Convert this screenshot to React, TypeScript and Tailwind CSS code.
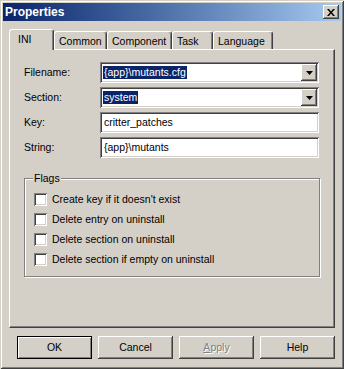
import React from "react";

const raised =
  "shadow-[inset_-1px_-1px_#404040,inset_1px_1px_#ffffff,inset_-2px_-2px_#808080,inset_2px_2px_#d4d0c8]";
const sunken =
  "shadow-[inset_1px_1px_#808080,inset_-1px_-1px_#ffffff,inset_2px_2px_#404040,inset_-2px_-2px_#d4d0c8]";

type TabProp = { label: string; width: string; active?: boolean };

const tabs: TabProp[] = [
  { label: "INI", width: "w-[45px]", active: true },
  { label: "Common", width: "w-[53px]" },
  { label: "Component", width: "w-[65px]" },
  { label: "Task", width: "w-[41px]" },
  { label: "Language", width: "w-[60px]" },
];

const flags = [
  "Create key if it doesn't exist",
  "Delete entry on uninstall",
  "Delete section on uninstall",
  "Delete section if empty on uninstall",
];

function Arrow() {
  return (
    <svg width="7" height="4" viewBox="0 0 7 4">
      <path d="M0 0h7L3.5 4z" fill="#000" />
    </svg>
  );
}

function Combo({ value }: { value: string }) {
  return (
    <div className={`w-[219px] h-[21px] bg-white flex items-center p-[2px] ${sunken}`}>
      <div className="flex-1 flex items-center pl-[1px]">
        <span className="bg-[#0a246a] text-white leading-[13px] px-[1px]">{value}</span>
      </div>
      <div className={`w-[16px] h-[17px] bg-[#d4d0c8] flex items-center justify-center ${raised}`}>
        <Arrow />
      </div>
    </div>
  );
}

function TextBox({ value }: { value: string }) {
  return (
    <div className={`w-[219px] h-[21px] bg-white flex items-center pl-[4px] ${sunken}`}>
      <span className="leading-[13px]">{value}</span>
    </div>
  );
}

function Button({ label, isDefault = false, disabled = false }: { label: React.ReactNode; isDefault?: boolean; disabled?: boolean }) {
  const frame = isDefault
    ? "border border-black shadow-[inset_1px_1px_#ffffff,inset_-1px_-1px_#808080]"
    : raised;
  return (
    <div
      className={`w-[75px] h-[23px] flex items-center justify-center bg-[#d4d0c8] ${frame} ${
        disabled ? "text-[#808080] [text-shadow:1px_1px_0_#ffffff]" : "text-black"
      }`}
    >
      {label}
    </div>
  );
}

export default function App() {
  return (
    <div
      className={`w-[344px] h-[369px] bg-[#d4d0c8] p-[3px] flex flex-col text-[10.5px] text-black font-['Liberation_Sans',Arial,sans-serif] shadow-[inset_1px_1px_#d4d0c8,inset_-1px_-1px_#404040,inset_2px_2px_#ffffff,inset_-2px_-2px_#808080]`}
    >
      {/* title bar */}
      <div className="h-[18px] flex items-center justify-between pl-[2px] pr-[2px] bg-gradient-to-r from-[#0a246a] to-[#a6caf0]">
        <span className="text-white font-bold text-[12px] leading-[14px]">Properties</span>
        <div className={`w-[16px] h-[14px] bg-[#d4d0c8] flex items-center justify-center ${raised}`}>
          <svg width="8" height="7" viewBox="0 0 8 7">
            <path d="M0 0h2l2 2.5L6 0h2L5 3.5 8 7H6L4 4.5 2 7H0l3-3.5z" fill="#000" />
          </svg>
        </div>
      </div>

      {/* tabs */}
      <div className="mt-[8px] ml-[6px] h-[20px] flex items-end relative z-10">
        {tabs.map(tab => (
          <div
            key={tab.label}
            className={`${tab.width} ${
              tab.active ? "h-[21px] -mb-px pl-[8px]" : "h-[18px] pl-[4px]"
            } bg-[#d4d0c8] border-t border-l border-r border-t-white border-l-white border-r-[#404040] rounded-t-[3px] shadow-[inset_-1px_0_#808080] pt-[3px] leading-[13px] whitespace-nowrap`}
          >
            {tab.label}
          </div>
        ))}
      </div>

      {/* panel */}
      <div className="ml-[6px] mr-[6px] h-[279px] border border-t-white border-l-white border-r-[#404040] border-b-[#404040] shadow-[inset_-1px_-1px_#808080] pl-[14px] pt-[12px]">
        <div className="grid grid-cols-[76px_219px] gap-y-[4px] items-center">
          <div>Filename:</div>
          <Combo value="{app}\mutants.cfg" />
          <div>Section:</div>
          <Combo value="system" />
          <div>Key:</div>
          <TextBox value="critter_patches" />
          <div>String:</div>
          <TextBox value="{app}\mutants" />
        </div>

        <div className="mt-[20px] w-[296px] h-[99px] border border-[#808080] shadow-[1px_1px_0_#ffffff,inset_1px_1px_0_#ffffff]">
          <div className="-mt-[7px] ml-[8px] flex">
            <span className="bg-[#d4d0c8] px-[1px] leading-[13px]">Flags</span>
          </div>
          <div className="mt-[4px] ml-[9px] flex flex-col">
            {flags.map(flag => (
              <div key={flag} className="h-[20px] flex items-center gap-[5px]">
                <div className={`w-[13px] h-[13px] bg-white ${sunken}`} />
                <span className="leading-[13px]">{flag}</span>
              </div>
            ))}
          </div>
        </div>
      </div>

      {/* buttons */}
      <div className="mt-[8px] ml-[14px] flex gap-[6px]">
        <Button label="OK" isDefault />
        <Button label="Cancel" />
        <Button
          label={
            <span>
              <span className="underline">A</span>pply
            </span>
          }
          disabled
        />
        <Button label="Help" />
      </div>
    </div>
  );
}
